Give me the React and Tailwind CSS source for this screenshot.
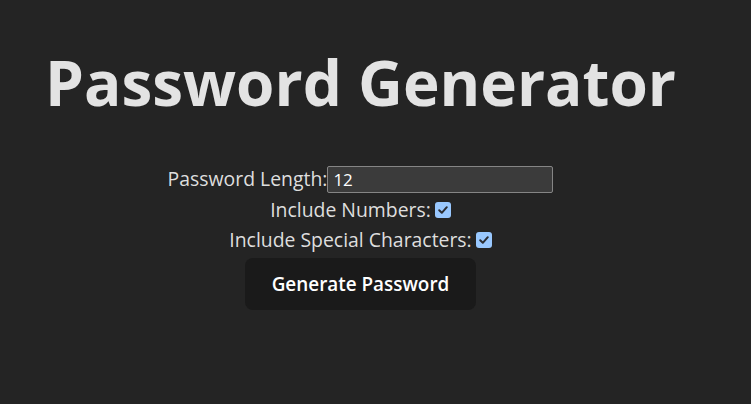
import React from "react";

function Check() {
  return (
    <span className="inline-flex items-center justify-center w-[16px] h-[16px] rounded-[3px] bg-[#99c8ff] ml-[4px] align-middle">
      <svg width="12" height="12" viewBox="0 0 12 12" fill="none">
        <path d="M2.2 6.3 L4.8 8.8 L9.8 3.2" stroke="#2a2d33" strokeWidth="2" strokeLinecap="round" strokeLinejoin="round" />
      </svg>
    </span>
  );
}

export default function App() {
  return (
    <div
      className="min-h-screen bg-[#242424] text-[#dedede] [color-scheme:dark]"
      style={{ fontFamily: '"Open Sans", "Noto Sans", sans-serif' }}
    >
      <div className="w-[721px] px-8 text-center">
        <h1 className="pt-[48px] text-[62px] font-bold leading-[1.1] text-[#e3e3e3]">
          Password Generator
        </h1>
        <div className="mt-[48px] flex flex-col items-center text-[19.4px] leading-[30px]">
          <div className="flex items-center">
            <span>Password Length:</span>
            <div className="w-[226px] h-[27px] bg-[#3b3b3b] border border-[#858585] rounded-[2px] text-left pl-[5px] text-[17px] leading-[25px] text-white">
              12
            </div>
          </div>
          <div className="flex items-center h-[31px]">
            <span>Include Numbers:</span>
            <Check />
          </div>
          <div className="flex items-center h-[30px]">
            <span>Include Special Characters:</span>
            <Check />
          </div>
          <button className="mt-[3px] w-[231px] h-[52px] bg-[#1a1a1a] rounded-[8px] text-[18.9px] font-semibold text-white">
            Generate Password
          </button>
        </div>
      </div>
    </div>
  );
}
